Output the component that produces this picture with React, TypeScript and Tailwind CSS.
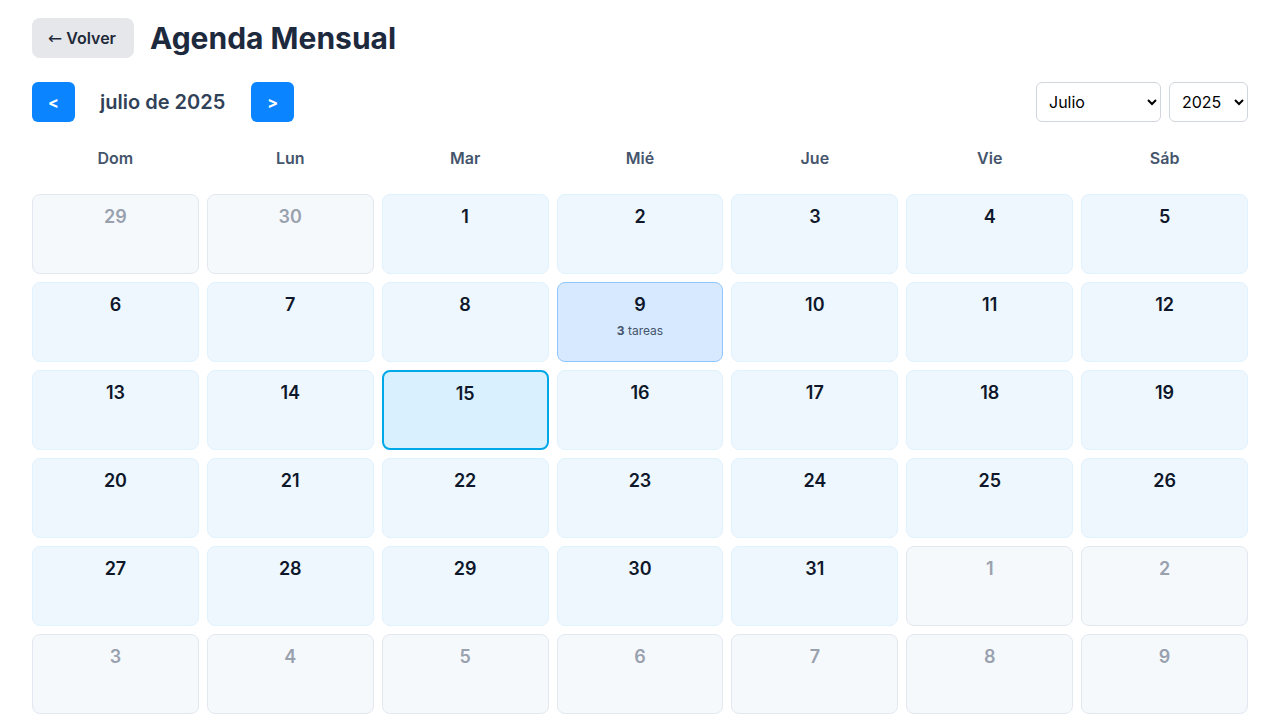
import { useState } from 'react'

const WEEKDAYS = ['Dom', 'Lun', 'Mar', 'Mié', 'Jue', 'Vie', 'Sáb']
const MONTHS = [
  'Enero', 'Febrero', 'Marzo', 'Abril', 'Mayo', 'Junio',
  'Julio', 'Agosto', 'Septiembre', 'Octubre', 'Noviembre', 'Diciembre',
]

type Day = { date: number; inMonth: boolean }

// tasks keyed by day of the current month
const TASKS: { [day: number]: number } = { 9: 3 }
const TODAY = 15

function buildGrid(year: number, month: number): Day[] {
  const first = new Date(year, month, 1).getDay()
  const daysInMonth = new Date(year, month + 1, 0).getDate()
  const prevDays = new Date(year, month, 0).getDate()
  const cells: Day[] = []
  for (let i = first - 1; i >= 0; i--) cells.push({ date: prevDays - i, inMonth: false })
  for (let d = 1; d <= daysInMonth; d++) cells.push({ date: d, inMonth: true })
  let next = 1
  while (cells.length < 42) cells.push({ date: next++, inMonth: false })
  return cells
}

export default function App() {
  const [month, setMonth] = useState(6)
  const [year, setYear] = useState(2025)
  const days = buildGrid(year, month)

  return (
    <div className="min-h-screen bg-white px-8 pt-[18px] font-['Inter',sans-serif] text-slate-800">
      <header className="flex items-center gap-4">
        <button className="flex h-10 items-center gap-1 rounded-lg bg-gray-200 pl-4 pr-[18px] text-base font-semibold text-gray-800">
          <span className="font-['DejaVu_Sans',sans-serif] text-[17px] leading-none font-normal">←</span>
          Volver
        </button>
        <h1 className="text-[30px] leading-9 font-bold text-slate-800">Agenda Mensual</h1>
      </header>

      <div className="mt-6 flex items-center justify-between">
        <div className="flex items-center gap-[25px]">
          <button className="h-10 w-[43px] rounded-md bg-[#0a84ff] text-base font-bold text-white">
            &lt;
          </button>
          <span className="text-xl font-semibold text-slate-700">julio de {year}</span>
          <button className="ml-px h-10 w-[43px] rounded-md bg-[#0a84ff] text-base font-bold text-white">
            &gt;
          </button>
        </div>
        <div className="flex items-center gap-2">
          <select
            value={month}
            onChange={(e) => setMonth(Number(e.target.value))}
            className="h-10 w-[125px] rounded-md border border-gray-300 bg-white pl-2 pr-1.5 text-base text-black"
          >
            {MONTHS.map((m, i) => (
              <option key={m} value={i}>{m}</option>
            ))}
          </select>
          <select
            value={year}
            onChange={(e) => setYear(Number(e.target.value))}
            className="h-10 w-[79px] rounded-md border border-gray-300 bg-white pl-2 pr-1.5 text-base text-black"
          >
            {[2024, 2025, 2026].map((y) => (
              <option key={y} value={y}>{y}</option>
            ))}
          </select>
        </div>
      </div>

      <div className="mt-[18px] grid grid-cols-7 gap-2">
        {WEEKDAYS.map((w) => (
          <div key={w} className="h-[38px] pt-[6px] text-center text-base font-semibold text-slate-600">
            {w}
          </div>
        ))}
      </div>

      <div className="mt-4 grid grid-cols-7 gap-2">
        {days.map((d, i) => {
          const tasks = d.inMonth ? TASKS[d.date] : undefined
          const isToday = d.inMonth && d.date === TODAY
          let cls = 'border border-sky-100 bg-[#eef7fe] text-slate-900'
          if (!d.inMonth) cls = 'border border-slate-200 bg-[#f6f9fc] text-gray-400'
          else if (isToday) cls = 'border-2 border-[#00a8e8] bg-[#d9f1ff] text-slate-900'
          else if (tasks) cls = 'border border-blue-300 bg-[#d6e9fe] text-slate-900'
          return (
            <div key={i} className={`flex h-20 flex-col items-center rounded-lg pt-2 ${cls}`}>
              <span className="text-lg font-semibold">{d.date}</span>
              {tasks && (
                <span className="mt-1 text-xs text-slate-600">
                  <b className="font-bold">{tasks}</b> tareas
                </span>
              )}
            </div>
          )
        })}
      </div>
    </div>
  )
}
